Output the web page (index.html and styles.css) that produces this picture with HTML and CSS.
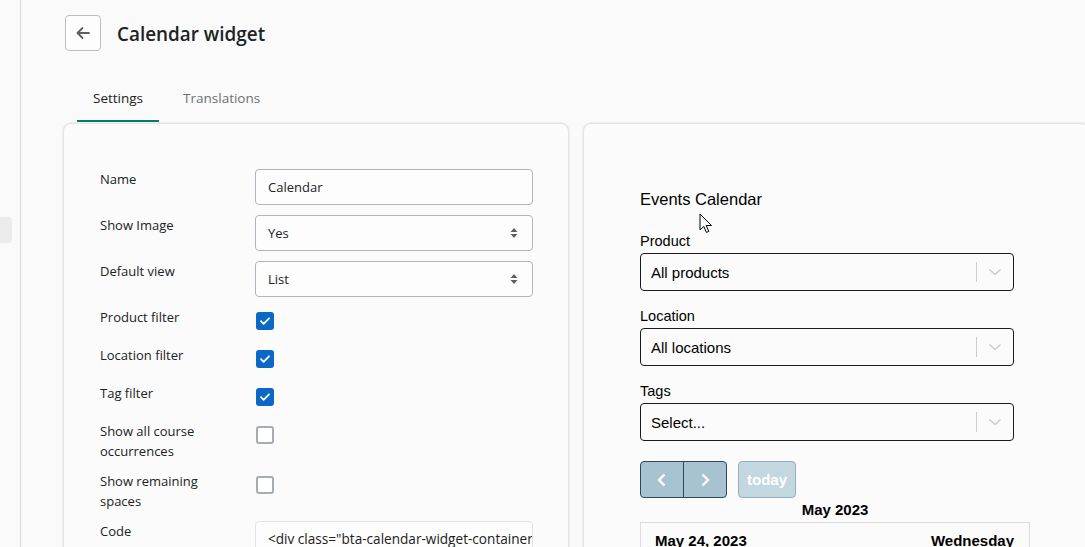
FILE: index.html
```html
<!DOCTYPE html>
<html lang="en">
<head>
<meta charset="utf-8">
<title>Calendar widget</title>
<link rel="stylesheet" href="styles.css">
</head>
<body>
<div class="app">
  <aside class="sidebar"><div class="side-item"></div></aside>
  <main class="main">
    <header class="page-header">
      <button class="back-btn" aria-label="Back">
        <svg width="16" height="16" viewBox="0 0 16 16"><path d="M14 8H2.5M7.5 3L2.5 8l5 5" fill="none" stroke="#5c5f62" stroke-width="1.8" stroke-linecap="round" stroke-linejoin="round"/></svg>
      </button>
      <h1 class="page-title">Calendar widget</h1>
    </header>
    <nav class="tabs">
      <div class="tab active">Settings</div>
      <div class="tab">Translations</div>
    </nav>
    <div class="cards">
      <section class="card settings">
        <div class="row">
          <div class="label">Name</div>
          <div class="control"><div class="field">Calendar</div></div>
        </div>
        <div class="row">
          <div class="label">Show Image</div>
          <div class="control"><div class="field select">Yes<svg class="updown" width="8" height="12" viewBox="0 0 8 12"><path d="M4 1L7.5 5h-7zM4 11L.5 7h7z" fill="#5c5f62"/></svg></div></div>
        </div>
        <div class="row">
          <div class="label">Default view</div>
          <div class="control"><div class="field select">List<svg class="updown" width="8" height="12" viewBox="0 0 8 12"><path d="M4 1L7.5 5h-7zM4 11L.5 7h7z" fill="#5c5f62"/></svg></div></div>
        </div>
        <div class="row">
          <div class="label">Product filter</div>
          <div class="control check-cell"><span class="checkbox on"><svg width="12" height="10" viewBox="0 0 12 10"><path d="M2 5.2l2.6 2.6L10 2.3" fill="none" stroke="#fff" stroke-width="1.8" stroke-linecap="round" stroke-linejoin="round"/></svg></span></div>
        </div>
        <div class="row">
          <div class="label">Location filter</div>
          <div class="control check-cell"><span class="checkbox on"><svg width="12" height="10" viewBox="0 0 12 10"><path d="M2 5.2l2.6 2.6L10 2.3" fill="none" stroke="#fff" stroke-width="1.8" stroke-linecap="round" stroke-linejoin="round"/></svg></span></div>
        </div>
        <div class="row">
          <div class="label">Tag filter</div>
          <div class="control check-cell"><span class="checkbox on"><svg width="12" height="10" viewBox="0 0 12 10"><path d="M2 5.2l2.6 2.6L10 2.3" fill="none" stroke="#fff" stroke-width="1.8" stroke-linecap="round" stroke-linejoin="round"/></svg></span></div>
        </div>
        <div class="row">
          <div class="label">Show all course occurrences</div>
          <div class="control check-cell"><span class="checkbox"></span></div>
        </div>
        <div class="row">
          <div class="label">Show remaining spaces</div>
          <div class="control check-cell"><span class="checkbox"></span></div>
        </div>
        <div class="row">
          <div class="label">Code</div>
          <div class="control"><div class="field code">&lt;div class="bta-calendar-widget-container"&gt;&lt;/div&gt;</div></div>
        </div>
      </section>
      <section class="card preview">
        <h2 class="ec-title">Events Calendar</h2>
        <div class="ec-group">
          <div class="ec-label">Product</div>
          <div class="ec-select"><span class="ec-value">All products</span><span class="ec-ind"><span class="ec-sep"></span><svg width="14" height="8" viewBox="0 0 14 8"><path d="M1.5 1.5L7 6.5l5.5-5" fill="none" stroke="#cccccc" stroke-width="1.6"/></svg></span></div>
        </div>
        <div class="ec-group">
          <div class="ec-label">Location</div>
          <div class="ec-select"><span class="ec-value">All locations</span><span class="ec-ind"><span class="ec-sep"></span><svg width="14" height="8" viewBox="0 0 14 8"><path d="M1.5 1.5L7 6.5l5.5-5" fill="none" stroke="#cccccc" stroke-width="1.6"/></svg></span></div>
        </div>
        <div class="ec-group">
          <div class="ec-label">Tags</div>
          <div class="ec-select"><span class="ec-value">Select...</span><span class="ec-ind"><span class="ec-sep"></span><svg width="14" height="8" viewBox="0 0 14 8"><path d="M1.5 1.5L7 6.5l5.5-5" fill="none" stroke="#cccccc" stroke-width="1.6"/></svg></span></div>
        </div>
        <div class="fc-toolbar">
          <div class="fc-btn-group">
            <button class="fc-btn"><svg width="12" height="16" viewBox="0 0 12 16"><path d="M8.5 2.5L3 8l5.5 5.5" fill="none" stroke="#fff" stroke-width="2.4"/></svg></button>
            <button class="fc-btn"><svg width="12" height="16" viewBox="0 0 12 16"><path d="M3.5 2.5L9 8l-5.5 5.5" fill="none" stroke="#fff" stroke-width="2.4"/></svg></button>
          </div>
          <button class="fc-today">today</button>
        </div>
        <div class="fc-month">May 2023</div>
        <div class="fc-list">
          <div class="fc-day-row"><span>May 24, 2023</span><span>Wednesday</span></div>
        </div>
      </section>
    </div>
  </main>
</div>
<svg class="cursor" width="14" height="22" viewBox="0 0 14 22"><path d="M1 1v16l3.8-3.6 2.6 6 2.4-1-2.6-5.9H12.5z" fill="#fff" stroke="#000" stroke-width="1" stroke-linejoin="round"/></svg>
</body>
</html>
```
FILE: styles.css
```css
* { box-sizing: border-box; }
html, body { margin: 0; padding: 0; }
body {
  background: #fafafa;
  font-family: "Open Sans", "Noto Sans", sans-serif;
  color: #202223;
  width: 1085px;
  height: 547px;
  overflow: hidden;
  position: relative;
}
.app { display: flex; height: 547px; }
.sidebar {
  width: 21px;
  flex: none;
  border-right: 1px solid #d3dce4;
  padding-top: 217px;
}
.side-item {
  width: 12px;
  height: 26px;
  background: #ebebeb;
  border-radius: 0 4px 4px 0;
}
.main {
  flex: none;
  width: 1100px;
  padding-left: 42px;
}
.page-header {
  display: flex;
  align-items: flex-start;
  gap: 16px;
  margin-top: 15px;
  padding-left: 2px;
  height: 36px;
}
.back-btn {
  width: 36px;
  height: 36px;
  border: 1px solid #babfc3;
  border-radius: 4px;
  background: #fdfdfd;
  display: flex;
  align-items: center;
  justify-content: center;
  padding: 0;
}
.page-title {
  margin: 0;
  font-size: 18.9px;
  font-weight: 600;
  line-height: 36px;
  padding-top: 1px;
  color: #202223;
}
.tabs {
  display: flex;
  gap: 8px;
  margin-top: 22px;
  padding-left: 14px;
}
.tab {
  font-size: 13.5px;
  line-height: 20px;
  padding: 15px 16px 12px;
  border-bottom: 3px solid transparent;
  color: #6d7175;
}
.tab.active {
  color: #202223;
  border-bottom-color: #008060;
}
.cards {
  display: flex;
  gap: 14px;
  align-items: flex-start;
}
.card {
  background: #fbfbfb;
  border: 1px solid #e4e4e4;
  box-shadow: 0 0 0 1px #efefef;
  border-radius: 8px 8px 0 0;
  height: 440px;
}
.settings {
  width: 506px;
  padding: 45px 36px 0 36px;
  display: flex;
  flex-direction: column;
  gap: 10px;
}
.row { display: flex; align-items: flex-start; }
.label {
  width: 155px;
  flex: none;
  font-size: 13px;
  line-height: 20px;
  padding-right: 20px;
  color: #202223;
}
.control { width: 278px; flex: none; }
.field {
  height: 36px;
  border: 1px solid #aeb6bd;
  border-radius: 4px;
  background: #fdfdfd;
  display: flex;
  align-items: center;
  padding: 0 12px;
  font-size: 13px;
  color: #202223;
}
.field.select { justify-content: space-between; padding-right: 14px; }
.field.code {
  border-color: #e1e3e5;
  white-space: nowrap;
  overflow: hidden;
  height: 40px;
  align-items: flex-start;
  padding-top: 7px;
  font-size: 13.6px;
}
.check-cell {
  height: 28px;
  display: flex;
  align-items: center;
  padding-left: 1px;
}
.checkbox {
  width: 18px;
  height: 18px;
  border-radius: 3px;
  border: 2px solid #a6acb1;
  background: #fff;
  display: flex;
  align-items: center;
  justify-content: center;
}
.checkbox.on { background: #0b68c4; border-color: #0b68c4; }
.preview {
  width: 506px;
  padding: 63px 0 0 56px;
  font-family: "Liberation Sans", Arial, sans-serif;
  color: #000;
}
.ec-title {
  margin: 0;
  font-size: 16.5px;
  font-weight: 400;
  line-height: 24px;
}
.ec-group { margin-top: 16px; width: 374px; }
.ec-group:first-of-type { margin-top: 21px; }
.ec-label { font-size: 14.5px; line-height: 18px; margin-bottom: 3px; }
.ec-select {
  height: 38px;
  border: 1px solid #1a1a1a;
  border-radius: 4px;
  display: flex;
  align-items: center;
  justify-content: space-between;
  padding-left: 10px;
  font-size: 15px;
}
.ec-ind { display: flex; align-items: center; height: 100%; width: 37px; gap: 11px; }
.ec-sep { width: 1px; height: 20px; background: #cccccc; }
.fc-toolbar { display: flex; gap: 11px; margin-top: 20px; }
.fc-btn-group { display: flex; }
.fc-btn {
  width: 44px;
  height: 37px;
  background: #a7c3d1;
  border: 1px solid #2f475b;
  display: flex;
  align-items: center;
  justify-content: center;
  padding: 0;
}
.fc-btn:first-child { border-radius: 4px 0 0 4px; }
.fc-btn:last-child { border-radius: 0 4px 4px 0; margin-left: -1px; }
.fc-today {
  width: 58px;
  height: 37px;
  background: #c3d7e1;
  border: 1px solid #98afbd;
  border-radius: 4px;
  color: #fff;
  font-family: "Liberation Sans", Arial, sans-serif;
  font-weight: 700;
  font-size: 15px;
  padding: 0;
}
.fc-month {
  width: 390px;
  text-align: center;
  font-weight: 700;
  font-size: 15px;
  line-height: 18px;
  margin-top: 3px;
}
.fc-list {
  width: 390px;
  margin-top: 3px;
  border: 1px solid #dddddd;
  border-bottom: none;
  height: 40px;
}
.fc-day-row {
  display: flex;
  justify-content: space-between;
  padding: 7px 15px 0 14px;
  font-weight: 700;
  font-size: 15px;
  line-height: 22px;
}
.cursor {
  position: absolute;
  left: 699px;
  top: 213px;
}
```
